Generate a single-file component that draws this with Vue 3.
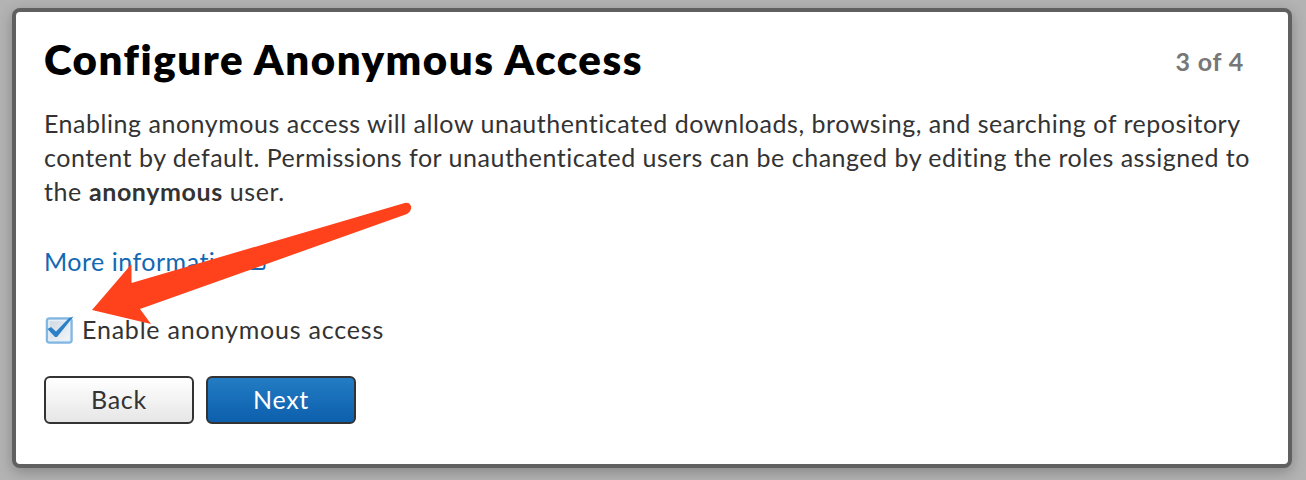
<template>
  <div class="page">
    <section class="wizard">
      <header class="wizard-header">
        <h1 class="title">Configure Anonymous Access</h1>
        <span class="progress">3 of 4</span>
      </header>

      <p class="description">
        <span class="line line-1">Enabling anonymous access will allow unauthenticated downloads, browsing, and searching of repository</span>
        <span class="line line-2">content by default. Permissions for unauthenticated users can be changed by editing the roles assigned to</span>
        <span class="line line-3">the <strong>anonymous</strong> user.</span>
      </p>

      <a class="more-link" href="#" @click.prevent>
        <span>More information</span>
        <svg class="external" viewBox="0 0 20 20" aria-hidden="true">
          <path d="M9 4H4.500Q2 4 2 6.500V15.500Q2 18 4.500 18H14Q16.500 18 16.500 15.500V11M11 2H18V9M18 2L9 11" />
        </svg>
      </a>

      <label class="option">
        <input v-model="anonymousEnabled" type="checkbox" class="option-input">
        <svg class="checkbox" viewBox="0 0 30 30" aria-hidden="true">
          <defs>
            <linearGradient id="boxFill" x1="0" y1="0" x2="1" y2="1">
              <stop offset="0" stop-color="#cbd5df" />
              <stop offset="1" stop-color="#f7f9fb" />
            </linearGradient>
          </defs>
          <rect x="3" y="4.500" width="24.500" height="24" rx="2.500" fill="url(#boxFill)" stroke="#82b7e2" stroke-width="2.500" />
          <rect x="5" y="6.500" width="20.500" height="20" fill="none" stroke="#e4f0fa" stroke-width="1.500" />
          <path v-if="anonymousEnabled" d="M3.500 15L7 13L12 17.500L25 4L29.500 2.500L13 23H11Z" fill="#2b80c8" />
        </svg>
        <span class="option-text">Enable anonymous access</span>
      </label>

      <div class="actions">
        <button type="button" class="btn">Back</button>
        <button type="button" class="btn btn-primary">Next</button>
      </div>
    </section>

    <svg class="arrow" viewBox="0 0 330 130" aria-hidden="true">
      <path d="M2 110L41.500 64V83L313 3.500Q319 1 321 6Q322 11 317 14L50 109L61 124Z" />
    </svg>
  </div>
</template>

<script setup>
import { ref } from 'vue'

const anonymousEnabled = ref(true)
</script>

<style>
body {
  margin: 0;
}
</style>

<style scoped>
.page {
  position: relative;
  box-sizing: border-box;
  height: 480px;
  padding: 8px 14px 12px 12px;
  overflow: hidden;
  background: #b3b3b3;
  font-family: Lato, "Open Sans", sans-serif;
  color: #333;
}

.wizard {
  box-sizing: border-box;
  height: 460px;
  padding: 24px 34px 0 28px;
  border: 4px solid #606060;
  border-radius: 8px;
  background: #fff;
  box-shadow: 0 4px 14px rgba(0, 0, 0, 0.25);
}

.wizard-header {
  display: flex;
  justify-content: space-between;
  align-items: center;
  height: 46px;
  padding-right: 10px;
  white-space: nowrap;
}

.title {
  margin: 0;
  font-size: 42px;
  line-height: 46px;
  font-weight: 800;
  letter-spacing: 1.53px;
  color: #000;
}

.progress {
  padding-top: 3px;
  font-size: 25px;
  font-weight: 700;
  letter-spacing: 0.8px;
  color: #777;
}

.description {
  margin: 24px 0 0;
  font-size: 25px;
  line-height: 34px;
}

.line {
  display: block;
  white-space: nowrap;
}

.line-1 {
  letter-spacing: 0.53px;
}

.line-2 {
  letter-spacing: 0.51px;
}

.line-3 {
  letter-spacing: 0.6px;
}

.more-link {
  display: flex;
  align-items: center;
  gap: 4px;
  width: max-content;
  height: 34px;
  margin-top: 36px;
  font-size: 25px;
  letter-spacing: 0.5px;
  color: #1268b3;
  text-decoration: none;
}

.external {
  width: 20px;
  height: 20px;
  fill: none;
  stroke: currentColor;
  stroke-width: 2;
}

.option {
  display: flex;
  align-items: center;
  width: max-content;
  height: 34px;
  margin-top: 34px;
  font-size: 25px;
}

.option-input {
  position: absolute;
  opacity: 0;
}

.checkbox {
  width: 30px;
  height: 30px;
  margin-right: 8px;
}

.option-text {
  letter-spacing: 0.8px;
}

.actions {
  display: flex;
  gap: 12px;
  margin-top: 30px;
}

.btn {
  box-sizing: border-box;
  width: 150px;
  height: 48px;
  padding: 0 0 2px;
  border: 2px solid #333;
  border-radius: 6px;
  background: linear-gradient(#fff, #e6e6e6);
  font-family: inherit;
  font-size: 25px;
  letter-spacing: 0.7px;
  color: #333;
}

.btn-primary {
  background: linear-gradient(#237cc4, #0c5fac);
  color: #fff;
}

/* pointer drawn over the dialog, aimed at the checkbox */
.arrow {
  position: absolute;
  left: 90px;
  top: 200px;
  width: 330px;
  height: 130px;
  fill: #ff421c;
  pointer-events: none;
}
</style>
